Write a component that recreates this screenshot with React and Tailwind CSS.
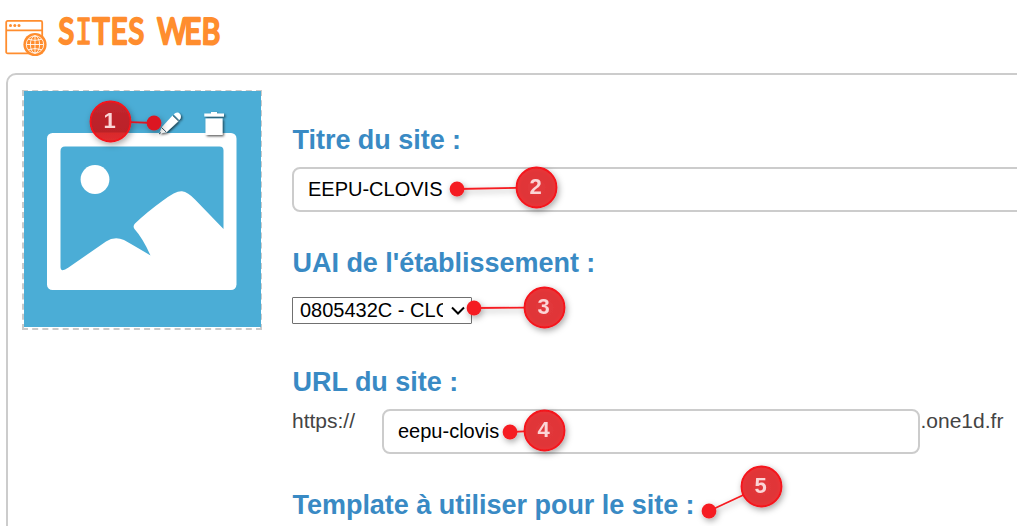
const markers = [
  { n: 1, cx: 110.5, cy: 121.5, dx: 154, dy: 123 },
  { n: 2, cx: 536.5, cy: 187.5, dx: 457, dy: 189 },
  { n: 3, cx: 544.5, cy: 307.5, dx: 474, dy: 308 },
  { n: 4, cx: 544.5, cy: 430.5, dx: 510, dy: 432 },
  { n: 5, cx: 761.5, cy: 486.5, dx: 709, dy: 511 },
];

function Markers() {
  return (
    <svg className="pointer-events-none absolute left-0 top-0" width="1017" height="526">
      <defs>
        <filter id="shade" x="-50%" y="-50%" width="220%" height="220%">
          <feDropShadow dx="1.5" dy="2.5" stdDeviation="3" floodColor="#000" floodOpacity="0.35" />
        </filter>
        <radialGradient id="ball">
          <stop offset="0" stopColor="#e23a3d" />
          <stop offset="0.75" stopColor="#e03437" />
          <stop offset="1" stopColor="#ea3538" />
        </radialGradient>
        <linearGradient id="ballDark" x1="0" y1="0" x2="0" y2="1">
          <stop offset="0" stopColor="#c1272f" />
          <stop offset="0.76" stopColor="#bb2028" />
          <stop offset="0.79" stopColor="#da2a2c" />
          <stop offset="1" stopColor="#df2e30" />
        </linearGradient>
      </defs>
      {markers.map(({ n, cx, cy, dx, dy }) => {
        const len = Math.hypot(dx - cx, dy - cy);
        const color = n === 1 ? "#dc1420" : "#f51c20";
        return (
          <g key={n} filter="url(#shade)">
            <line
              x1={cx + ((dx - cx) * 20) / len}
              y1={cy + ((dy - cy) * 20) / len}
              x2={dx}
              y2={dy}
              stroke={color}
              strokeWidth="1.8"
            />
            <circle cx={dx} cy={dy} r="7.4" fill={color} />
            <circle cx={cx} cy={cy} r="20" fill={n === 1 ? "url(#ballDark)" : "url(#ball)"} stroke="#f5121a" strokeWidth="1.8" />
            <text x={cx - 1} y={cy + 6} textAnchor="middle" fill="#fbd5d6" className="font-['Liberation_Sans',sans-serif] text-[22px] font-bold">
              {n}
            </text>
          </g>
        );
      })}
    </svg>
  );
}

function SiteIcon() {
  return (
    <svg width="44" height="40" viewBox="0 0 44 40" fill="none" stroke="#ff8d2e" strokeWidth="1.8">
      <rect x="2.2" y="2.9" width="36" height="32.5" rx="1.5" />
      <path d="M2.2 12.4H38" />
      <g fill="#ff8d2e" stroke="none">
        <circle cx="6.500" cy="7.5" r="1.5" />
        <circle cx="10.800" cy="7.5" r="1.5" />
        <circle cx="15" cy="7.5" r="1.5" />
        <circle cx="31" cy="26.5" r="11.6" />
      </g>
      <g stroke="#fff" strokeOpacity="0.85" strokeWidth="1" transform="translate(0.7 0)">
        <circle cx="30.3" cy="26.5" r="8.7" />
        <ellipse cx="30.3" cy="26.5" rx="4.6" ry="8.7" />
        <path d="M30.3 17.8v17.4M21.6 26.500H39M23.5 21.3q6.8 2.300 13.6 0M23.5 31.700q6.8-2.300 13.6 0" />
      </g>
    </svg>
  );
}

function Title() {
  return (
    <svg width="170" height="46" viewBox="56 8 170 46" role="heading">
      <g fill="#ff8d2e" stroke="#ff8d2e" strokeWidth="2.6" strokeLinejoin="round" transform="scale(0.8 1)" className="font-['Lato',sans-serif] text-[36px]">
        <text y="44" x="73">S</text>
        <text y="44" x="94" strokeWidth="1.3" className="font-['DejaVu_Sans_Mono',monospace] text-[35px]">I</text>
        <text y="44" x="115.500 138.500 160.500 178 196.500 230.500 252" rotate="0 0 0 0 0 0 1">TES WEB</text>
      </g>
    </svg>
  );
}

function Picture() {
  return (
    <div className="h-[240px] w-[240px] shrink-0 border-2 border-dashed border-[#cacaca]">
      <svg width="237" height="236" viewBox="24 91 237 236" className="-mt-px">
        <defs>
          <filter id="iconShade" x="-30%" y="-30%" width="170%" height="170%">
            <feDropShadow dx="1.3" dy="1.3" stdDeviation="0.9" floodColor="#000" floodOpacity="0.65" />
          </filter>
        </defs>
        <rect x="24" y="91" width="237" height="236" fill="#4badd6" />
        <rect x="47" y="133" width="189.500" height="157" rx="5.500" fill="#fff" />
        <path
          d="M65 146.500H219.500Q223.500 146.500 223.500 150.500V229L195 199.500Q188 192 182 191.200Q176 190.500 163 200.500Q147 212 135 223.500Q132.500 226 134.500 229Q143 238.500 150.500 255.500Q139 248.500 124 240Q114.500 236 106 241.500L68.500 267.500Q60.500 273 60.500 267V151Q60.500 146.500 65 146.500Z"
          fill="#4badd6"
        />
        <circle cx="95" cy="179.500" r="14.400" fill="#fff" />
        <g filter="url(#iconShade)" fill="#fff">
          <path d="M159.500 133.500L161.500 127.500L172.500 115.500L178.500 121L166.500 132.300Z" />
          <path d="M173.700 114.300Q177.300 111 180 114Q182.200 117 179.300 120Z" />
          <path d="M204.300 113.500H211V112H217V113.500H224V116.500H204.300ZM205.500 118.500H222.500V135H205.500Z" />
        </g>
        <path d="M161.500 127.500L166.200 132M172.900 115.500L178.500 121M159 134L161 132.500" stroke="#34505f" strokeWidth="1" />
      </svg>
    </div>
  );
}

function Label({ children }) {
  return <h2 className="h-8 whitespace-nowrap pl-[0.5px] pt-px text-[27px] font-bold leading-8 tracking-[-0.03px] text-[#398ac4]">{children}</h2>;
}

export default function App() {
  return (
    <div className="relative h-[526px] w-[1017px] overflow-hidden bg-white font-['Liberation_Sans',Arial,sans-serif]">
      <header className="flex h-[73px] pl-1">
        <div className="pt-[18px]">
          <SiteIcon />
        </div>
        <div className="pl-2 pt-2">
          <Title />
        </div>
      </header>
      <main className="ml-1.5 flex h-[480px] w-[1050px] rounded-tl-[10px] border-2 border-[#ccc] pl-3.5 pt-[15px]">
        <Picture />
        <div className="ml-[30px] grow pt-[33px]">
          <Label>Titre du site :</Label>
          <div className="mt-3 flex h-[45px] items-center rounded-lg border-2 border-[#ccc] pb-0.5 pl-3.5 text-[20px] text-black">
            EEPU-CLOVIS
          </div>
          <div className="mt-[34px]">
            <Label>UAI de l'établissement :</Label>
          </div>
          <div className="mt-[19px] flex h-[27px] w-[180px] items-center rounded-[1px] border border-[#707070] pl-[7px] text-[20px] text-black">
            <span className="-mt-0.5 w-[143px] overflow-hidden whitespace-nowrap">0805432C - CLOVIS</span>
            <svg className="ml-2" width="14" height="9" viewBox="0 0 14 9" fill="none" stroke="#000" strokeWidth="2">
              <path d="M1 1.500L7 7.500L13 1.500" />
            </svg>
          </div>
          <div className="mt-[41px]">
            <Label>URL du site :</Label>
          </div>
          <div className="mt-3 flex text-[21px] text-[#444]">
            <span className="w-[90px] leading-6">https://</span>
            <div className="flex h-[45px] w-[538px] items-center rounded-lg border-2 border-[#ccc] pb-0.5 pl-3.5 text-[20px] text-black">
              eepu-clovis
            </div>
            <span className="pl-[0.5px] leading-6">.one1d.fr</span>
          </div>
          <div className="mt-[34px]">
            <Label>Template à utiliser pour le site :</Label>
          </div>
        </div>
      </main>
      <Markers />
    </div>
  );
}
